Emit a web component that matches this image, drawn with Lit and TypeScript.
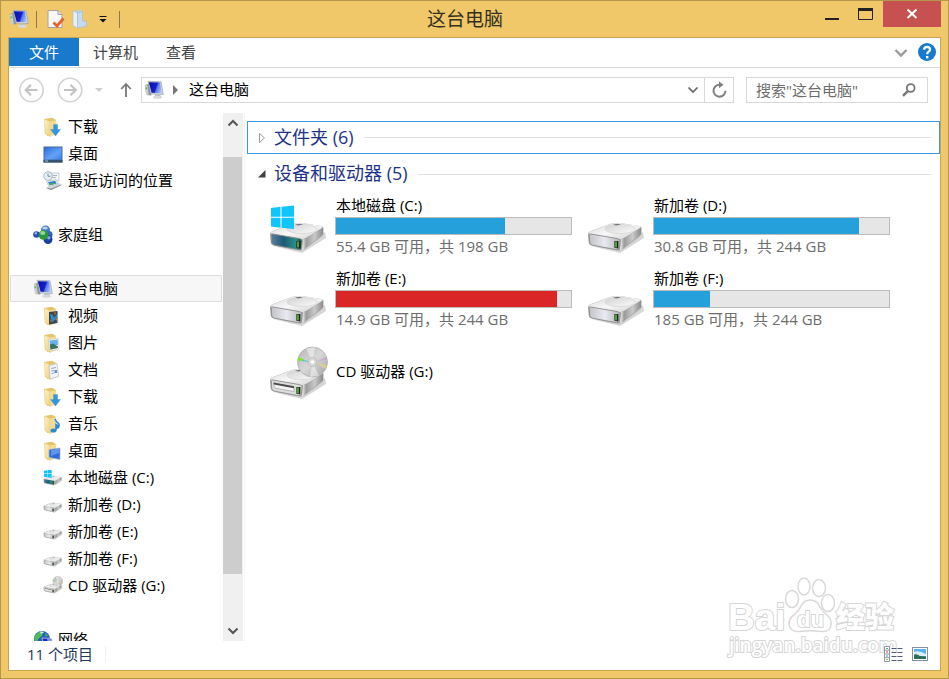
import { LitElement, html, css, svg, nothing } from "lit";
import { customElement } from "lit/decorators.js";
import { classMap } from "lit/directives/class-map.js";

interface NavRow {
  icon: string;
  label: string;
  level: 1 | 2;
  selected?: boolean;
}

interface Drive {
  icon: string;
  name: string;
  detail?: string;
  used?: number;
  full?: boolean;
}

const NAV: (NavRow | null)[] = [
  { icon: "folder-down", label: "下载", level: 2 },
  { icon: "desktop", label: "桌面", level: 2 },
  { icon: "recent", label: "最近访问的位置", level: 2 },
  null,
  { icon: "homegroup", label: "家庭组", level: 1 },
  null,
  { icon: "pc", label: "这台电脑", level: 1, selected: true },
  { icon: "folder-video", label: "视频", level: 2 },
  { icon: "folder-picture", label: "图片", level: 2 },
  { icon: "folder-doc", label: "文档", level: 2 },
  { icon: "folder-down", label: "下载", level: 2 },
  { icon: "folder-music", label: "音乐", level: 2 },
  { icon: "folder-desktop", label: "桌面", level: 2 },
  { icon: "drive-c", label: "本地磁盘 (C:)", level: 2 },
  { icon: "drive", label: "新加卷 (D:)", level: 2 },
  { icon: "drive", label: "新加卷 (E:)", level: 2 },
  { icon: "drive", label: "新加卷 (F:)", level: 2 },
  { icon: "drive-cd", label: "CD 驱动器 (G:)", level: 2 },
  null,
  { icon: "network", label: "网络", level: 1 },
];

const DRIVES: Drive[] = [
  { icon: "drive-c", name: "本地磁盘 (C:)", detail: "55.4 GB 可用，共 198 GB", used: 72 },
  { icon: "drive", name: "新加卷 (D:)", detail: "30.8 GB 可用，共 244 GB", used: 87.4 },
  { icon: "drive", name: "新加卷 (E:)", detail: "14.9 GB 可用，共 244 GB", used: 93.9, full: true },
  { icon: "drive", name: "新加卷 (F:)", detail: "185 GB 可用，共 244 GB", used: 23.9 },
  { icon: "drive-cd", name: "CD 驱动器 (G:)" },
];

// Drives are drawn on a 60x60 grid, used both for tiles and for the tree.
const driveBody = (front: string) => svg`
  <path d="M5 50 L34 57 L58 42 L57 36 L34 52Z" fill="#000" opacity=".16"/>
  <path d="M2 38 Q2 36 5 35 L24 28 Q29 26.5 34 27 L53 30 Q56 30.500 55.500 33 L55.500 38 Q55 39.500 53 41 L37 53 Q34.500 55 31 54.200 L6 49.500 Q3 49 2.600 46Z" fill="#a9a9a9"/>
  <path d="M2.500 37.500 Q3 36 5 35.200 L24 28 Q29 26.500 34 27 L53 30 Q55.500 30.800 54 32 L38 42 Q35.500 43.500 32 43 L5 38.600Z" fill="url(#g-top)"/>
  <ellipse cx="34" cy="33" rx="15" ry="4.600" fill="url(#g-dish)" stroke="#d0d0d0" stroke-width=".6"/>
  <path d="M27 28.500 l5 -.8 l3 .8 l-5 1Z" fill="#777"/>
  <path d="M35 43 Q37 43 39 41.600 L55 31.800 L55 38 L37 52.500 Q35.500 54 34 54Z" fill="url(#g-side)"/>
  <path d="M3.200 38.500 Q3.300 37.600 5 38 L31.500 42.600 Q34 43.200 34 45 L33.400 52 Q33 54.200 31 53.800 L6.500 49.200 Q4 48.800 3.700 46.500Z" fill=${front} stroke="#8d8d8d" stroke-width=".9"/>
  <path d="M28.400 45 h4 v7.500 l-4 -.8Z" fill="#222"/>
  <path d="M29.200 45.600 h1.600 v6 l-1.600 -.4Z" fill="#55c530"/>`;

const folder = svg`
  <path d="M1.500 2 L9 .8 L13 3 L13.500 17 L4 19Z" fill="#e3c468"/>
  <path d="M1.500 2 L7 4.500 L7.500 19.500 L2 16.800Z" fill="url(#g-fold)" stroke="#e0c478" stroke-width=".5"/>
  <path d="M7 4.500 L13 3.200 L13.500 17 L7.500 19.500Z" fill="#f1dc96"/>`;

const pc = svg`
  <path d="M.8 5 L5 3.800 L7.500 15.500 L2.500 15Z" fill="#8e979c"/>
  <path d="M.8 5.200 L3.300 5 L4.800 15.400 L2 15Z" fill="#c9d0d0"/>
  <rect x="1.500" y="7.500" width="1.600" height="1.600" fill="#49c33a"/>
  <path d="M4 1.300 L17 1.800 L19.300 14.600 L7 14Z" fill="#d3d9dd" stroke="#8f98a2" stroke-width=".6"/>
  <path d="M4.800 2.200 L16 2.600 L17.800 13.200 L7.600 12.800Z" fill="url(#g-screen)"/>
  <path d="M11 14.300 h5 l1 2.400 q-3 2 -6 0Z" fill="#b9bfc3"/>
  <ellipse cx="13.500" cy="17.300" rx="4.500" ry="1.500" fill="#d5dadd"/>`;

const winLogo = svg`
  <path d="M3 12 L12.500 10.800 V20.800 H3Z M13.500 10.700 L26 9.500 V20.800 H13.500Z M3 21.700 H12.500 V31.800 L3 30.600Z M13.500 21.700 H26 V33 L13.500 31.800Z" fill="#0fc5fb"/>`;

const disc = svg`
  <circle cx="44.500" cy="20" r="15" fill="url(#g-disc)" stroke="#a8a8a8" stroke-width=".7"/>
  <path d="M44.500 20 L38 6.500 L47 5Z M44.500 20 L51 33.500 L42 35Z" fill="#fff" opacity=".45"/>
  <path d="M30.200 15 L36 17.500 L35.500 19 L30 18.500Z" fill="#7ee61c"/>
  <path d="M34 17.500 L40 19 L40 20 L34 19Z" fill="#42c9c4" opacity=".8"/>
  <path d="M59 17 L48 20 L58.500 15Z" fill="#c98fd0" opacity=".6"/>
  <path d="M57.500 27 L48 21 L59 23Z" fill="#e3cf8d" opacity=".8"/>
  <circle cx="44.500" cy="20" r="4.500" fill="#d8d8d8" stroke="#a5a5a5" stroke-width=".5"/>
  <circle cx="44.500" cy="20" r="1.800" fill="#fff"/>`;

const ICONS: Record<string, { box: string; art: unknown }> = {
  pc: { box: "0 0 20 20", art: pc },
  drive: { box: "0 4 60 60", art: driveBody("url(#g-front)") },
  "drive-c": { box: "0 4 60 60", art: svg`${driveBody("url(#g-teal)")}${winLogo}` },
  "drive-cd": {
    box: "0 4 60 60",
    art: svg`${driveBody("#dcdcdc")}
      <path d="M5.500 41 L26 44.800 L26 49.500 L6.500 46Z" fill="#f4f4f4" stroke="#999" stroke-width=".6"/>
      <path d="M5.500 40.500 L26 44.200 L26 46.200 L6 42.600Z" fill="#4a4a4a"/>${disc}`,
  },
  "folder-down": {
    box: "0 0 20 20",
    art: svg`${folder}<path d="M10.500 7.500 h4 v5 h3 l-5 6.500 l-5 -6.500 h3Z" fill="#2f97e0" stroke="#4b8fc4" stroke-width=".4"/>`,
  },
  "folder-video": {
    box: "0 0 20 20",
    art: svg`${folder}<path d="M6 6 L14.500 5 V17 L6 18.500Z" fill="#37464f"/><path d="M7 8 l3 1 l1 3 l3 -4 v3 l-4 5 l-2 -3Z" fill="#2f8fc9"/><path d="M7 13 l2 2 l-1 2Z M11 6.500 l2 0 l-1 3Z M12 13 l2 -1 v3Z" fill="#c9793a"/>`,
  },
  "folder-picture": {
    box: "0 0 20 20",
    art: svg`${folder}<path d="M5.500 6.500 L15.500 5.500 L16 16 L6.500 18Z" fill="#fff" stroke="#b8b8b8" stroke-width=".5"/><path d="M6.500 7.500 L14.700 6.500 L15 12 L7 13Z" fill="#68b2e8"/><path d="M6.900 11.500 L10 10.500 L15 13.500 V15 L7.300 16.700Z" fill="#3e7462"/>`,
  },
  "folder-doc": {
    box: "0 0 20 20",
    art: svg`${folder}<path d="M6 5.500 L14 3.500 L15.500 16.500 L7 19Z" fill="#f1f4fa" stroke="#a8afbb" stroke-width=".6"/><path d="M8 8.500 l5 -1 M8.200 11 l3 -.6 M8.400 13.500 l3 -.6" stroke="#96a5bf" stroke-width="1"/><rect x="11.500" y="10" width="2.500" height="3" fill="#6891cc"/>`,
  },
  "folder-music": {
    box: "0 0 20 20",
    art: svg`${folder}<path d="M12 5 Q13 8 15.500 9.500 Q17 12 14.500 14.500 Q15.500 11.500 13 10.500 V16" fill="none" stroke="#2c8ad6" stroke-width="1.600"/><ellipse cx="10.500" cy="16.500" rx="3" ry="2" fill="#2c8ad6"/>`,
  },
  "folder-desktop": {
    box: "0 0 20 20",
    art: svg`${folder}<path d="M6 8.500 L17 7 V18.500 L6 16.500Z" fill="#2f6ad8" stroke="#a9bad0" stroke-width=".8"/><path d="M8 8.500 L16 7.700 V12 L8 15Z" fill="#5e96ec"/>`,
  },
  desktop: {
    box: "0 0 20 20",
    art: svg`<rect x=".5" y="2.500" width="19" height="16" fill="#486a9c"/><rect x="1.500" y="3.500" width="17" height="12" fill="url(#g-desk)"/><rect x=".5" y="16" width="19" height="2.500" fill="#37526f"/><rect x="2" y="16.500" width="3" height="1" fill="#9cc7e8"/>`,
  },
  recent: {
    box: "0 0 20 20",
    art: svg`<rect x="7" y="2" width="9" height="8" fill="#f3f5f6" stroke="#b8bec2" stroke-width=".7"/><path d="M9 4.500 h5 M9 6.500 h4" stroke="#a9bac6"/><circle cx="5" cy="5" r="4.300" fill="#e4eef5" stroke="#a9b9c4" stroke-width="1"/><path d="M5 2.500 V5.300 H7.500" fill="none" stroke="#5d7f99" stroke-width=".8"/><path d="M3 17 L15.500 12.500 L19 14 L8 19.200Z" fill="#8e979c"/><path d="M3 16.300 L15.500 12 L18.500 13.200 L8 17.600Z" fill="#d5dadd"/><path d="M3.500 10.500 L13 8.500 L15 13 L6 15.500Z" fill="#eef2f5" stroke="#aab5bd" stroke-width=".6"/><path d="M5 11.200 L12.300 9.700 L13.500 12.500 L6.700 14.300Z" fill="#2d86c5"/><path d="M6 13 L9 12 L13.500 12.500 L6.700 14.300Z" fill="#53a35d"/>`,
  },
  homegroup: {
    box: "0 0 20 20",
    art: svg`<circle cx="3.500" cy="9.500" r="3.300" fill="#2d4fb4"/><circle cx="2.800" cy="8.300" r="1.200" fill="#9db4ee"/><circle cx="12.500" cy="5" r="4.500" fill="#4779c4"/><ellipse cx="12" cy="3" rx="2.800" ry="1.500" fill="#b8d2f3"/><circle cx="16" cy="9.500" r="3.600" fill="#3a63bd"/><circle cx="15" cy="14.500" r="4.500" fill="#1f3f9f"/><circle cx="15.800" cy="12.800" r="1.800" fill="#86a4e6"/><circle cx="10.500" cy="10" r="4.800" fill="#2a9741"/><ellipse cx="9.700" cy="8" rx="2.600" ry="1.900" fill="#8fdc8c"/>`,
  },
  network: {
    box: "0 0 20 20",
    art: svg`<circle cx="9" cy="9" r="8" fill="#2760bd"/><path d="M2 6 Q6 0 10 2 L9 6 L5 9 L4 14 Q0 10 2 6Z M12 3 L15 5 L13 7Z" fill="#4fbf52"/><path d="M7 1.500 Q10 1 11 2.500 L8 4Z" fill="#cdeafd"/><path d="M9 8 L18.500 8.500 L19.500 16 L11 16Z" fill="#1a28c4" stroke="#c7d0d8" stroke-width=".8"/><path d="M14 9 L18 9.200 L18.800 15.300 L16 15.300Z" fill="#7f98f0"/>`,
  },
};

const icon = (name: string, cls = "ico") =>
  svg`<svg class=${cls} viewBox=${cls === "ico" ? ICONS[name].box : "0 0 60 60"} aria-hidden="true">${ICONS[name].art}</svg>`;

@customElement("app-root")
export class AppRoot extends LitElement {
  static styles = css`
    :host {
      display: block;
      font: 15px/20px "Open Sans", "Noto Sans CJK SC", sans-serif;
      color: #000;
    }
    * { box-sizing: border-box; }
    button, input { font: inherit; color: inherit; border: 0; padding: 0; margin: 0; background: none; }
    a { color: inherit; text-decoration: none; }
    ul { list-style: none; margin: 0; padding: 0; }
    svg { display: block; flex: none; }
    h1, h2 { margin: 0; font-weight: 400; }
    .defs { position: absolute; }
    .window {
      position: relative;
      display: flex;
      flex-direction: column;
      height: 100vh;
      padding: 0 7px 7px;
      background: #f0c869;
      border: 1px solid #b4974f;
    }
    .title {
      display: grid;
      grid-template-columns: 1fr auto 1fr;
      height: 36px;
      padding-left: 1px;
      flex: none;
    }
    .title h1 { font-size: 19px; line-height: 36px; padding-right: 20px; color: #33301f; }
    .quick { display: flex; align-items: center; }
    .sep { width: 1px; height: 17px; background: #8f7a45; }
    .sep.first { margin: 0 9px 0 7px; }
    .sep.last { margin-left: 7px; }
    .ico { width: 20px; height: 20px; }
    .quick button { display: block; }
    .quick button + button { margin-left: 5px; }
    .controls { display: flex; justify-content: flex-end; align-items: flex-start; }
    .controls button { width: 34px; height: 26px; display: grid; place-items: center; }
    .controls .close { width: 58px; background: #c75050; }
    .frame {
      flex: 1;
      min-height: 0;
      display: flex;
      flex-direction: column;
      background: #fff;
      border: 1px solid #c8a454;
    }
    .ribbon {
      display: flex;
      align-items: center;
      height: 30px;
      flex: none;
      border-bottom: 1px solid #dadbdc;
      color: #444;
    }
    .ribbon .tab { height: 28px; padding: 0 14px; align-self: flex-start; }
    .ribbon .file { width: 70px; background: #1979ca; color: #fff; }
    .ribbon .fold { margin-left: auto; margin-right: 9px; }
    .ribbon .help { margin-right: 3px; }
    .bar { display: flex; align-items: center; height: 45px; flex: none; padding: 0 12px 2px 10px; }
    .bar .fwd { margin-left: 12px; }
    .bar .hist { width: 32px; display: grid; place-items: center; }
    .bar .up { width: 22px; display: grid; place-items: center; margin-right: 4px; }
    .address {
      flex: 1;
      min-width: 0;
      height: 26px;
      display: flex;
      align-items: center;
      border: 1px solid #d9d9d9;
      padding-left: 2px;
    }
    .address button { padding-bottom: 2px; }
    .address .crumb-arrow { margin: 0 10px 0 8px; }
    .address .drop { margin-left: auto; width: 22px; display: grid; place-items: center; padding: 0; }
    .address .refresh {
      width: 29px;
      height: 24px;
      display: grid;
      place-items: center;
      padding: 0;
      border-left: 1px solid #d9d9d9;
    }
    .search {
      display: flex;
      align-items: center;
      width: 182px;
      height: 26px;
      margin-left: 12px;
      padding: 0 11px 0 9px;
      border: 1px solid #d9d9d9;
    }
    .search input { flex: 1; min-width: 0; outline: 0; }
    .search input::placeholder { color: #6d6d6d; opacity: 1; }
    .body { flex: 1; min-height: 0; display: flex; }
    .nav { width: 236px; flex: none; display: flex; border-right: 1px solid #f5f5f5; }
    .tree { width: 214px; padding: 0 1px; overflow: hidden; }
    .tree li { height: 27px; }
    .row {
      display: flex;
      align-items: center;
      gap: 5px;
      height: 27px;
      padding-left: 32px;
      border: 1px solid transparent;
      white-space: nowrap;
    }
    .row span { padding-bottom: 2px; }
    .row.top { padding-left: 22px; }
    .row.selected { background: #f7f7f7; border-color: #dedede; }
    .scroll { width: 20px; display: flex; flex-direction: column; background: #f0f0f0; }
    .scroll button { height: 20px; display: grid; place-items: center; flex: none; }
    .before { flex: 24; }
    .thumb { flex: 417; background: #cdcdcd; margin-right: 1px; }
    .after { flex: 47; }
    .main { flex: 1; min-width: 0; padding: 8px 0 0 2px; overflow: hidden; }
    .group {
      display: flex;
      align-items: center;
      width: 100%;
      height: 33px;
      padding: 0 8px 0 9px;
      border: 1px solid transparent;
      color: #1e3287;
    }
    .group.focus { border-color: #3c96e6; }
    .group.open { height: 40px; }
    .group h2 { font-size: 18px; line-height: 24px; margin: 0 10px 0 7px; padding-bottom: 2px; }
    .group .rule { flex: 1; height: 1px; background: #e2e2e2; }
    .tiles {
      display: grid;
      grid-template-columns: repeat(auto-fill, 318px);
      row-gap: 13px;
      padding: 1px 0 0 21px;
    }
    .tile { display: flex; gap: 7px; height: 60px; }
    .tile .info { width: 237px; }
    .tile .info.plain { align-self: center; }
    .big { width: 60px; height: 60px; margin-top: 1px; }
    .name, .detail { padding-left: 1px; }
    .meter { height: 18px; margin: 2px 0 1px; background: #e6e6e6; border: 1px solid #bcbcbc; }
    .fill { height: 16px; background: #26a0da; }
    .fill.full { background: #da2626; }
    .detail { color: #6d6d6d; }
    .status { display: flex; align-items: center; height: 29px; flex: none; padding: 0 12px 3px 18px; color: #1e395b; }
    .status .line { width: 1px; height: 16px; background: #f0f0f0; margin-left: 12px; }
    .status .views { display: flex; gap: 9px; margin-left: auto; z-index: 1; }
    .mark { position: absolute; right: 48px; bottom: 18px; pointer-events: none; }
    .mark text { fill: #fff; stroke: #d6d6d6; stroke-width: 2px; paint-order: stroke; }
    .mark .latin { font: 700 37px "Liberation Sans", sans-serif; }
    .mark .du { font: 700 22px "Liberation Sans", sans-serif; }
    .mark .han { font: 900 29px "Noto Sans CJK SC", sans-serif; }
    .mark .url { font: 600 19px "Open Sans", sans-serif; }
  `;

  private defs() {
    return html`<svg class="defs" width="0" height="0" aria-hidden="true"><defs>
      <linearGradient id="g-top" x1="0" y1="0" x2="1" y2="1"><stop offset="0" stop-color="#d6d6d6"/><stop offset=".5" stop-color="#f7f7f7"/><stop offset="1" stop-color="#cfcfcf"/></linearGradient>
      <linearGradient id="g-dish" x1="0" y1="0" x2="1" y2="1"><stop offset="0" stop-color="#d2d2d2"/><stop offset="1" stop-color="#fbfbfb"/></linearGradient>
      <linearGradient id="g-side" x1="0" y1="0" x2="1" y2="0"><stop offset="0" stop-color="#f2f2f2"/><stop offset=".2" stop-color="#9b9b9b"/><stop offset=".6" stop-color="#c9c9c9"/><stop offset="1" stop-color="#8b8b8b"/></linearGradient>
      <linearGradient id="g-front" x1="0" y1="0" x2="1" y2="0"><stop offset="0" stop-color="#c2c2c8"/><stop offset=".5" stop-color="#e9e9f1"/><stop offset="1" stop-color="#b5b5bb"/></linearGradient>
      <linearGradient id="g-teal" x1="0" y1="0" x2="1" y2="0"><stop offset="0" stop-color="#5c7f9c"/><stop offset=".4" stop-color="#1b5a78"/><stop offset=".8" stop-color="#2b8f86"/><stop offset="1" stop-color="#123c3c"/></linearGradient>
      <linearGradient id="g-fold" x1="0" y1="0" x2="1" y2="1"><stop offset="0" stop-color="#fdf3c4"/><stop offset="1" stop-color="#ecd07c"/></linearGradient>
      <linearGradient id="g-desk" x1="0" y1="0" x2="1" y2="1"><stop offset="0" stop-color="#2d6fdc"/><stop offset=".6" stop-color="#63a2f7"/><stop offset="1" stop-color="#3d7de0"/></linearGradient>
      <linearGradient id="g-screen" x1="0" y1=".3" x2="1" y2=".6"><stop offset="0" stop-color="#0c10a4"/><stop offset=".55" stop-color="#1420cc"/><stop offset=".65" stop-color="#5a7cec"/><stop offset="1" stop-color="#a9bdf6"/></linearGradient>
      <linearGradient id="g-disc" x1="0" y1="0" x2="1" y2="1"><stop offset="0" stop-color="#b4b4b4"/><stop offset=".5" stop-color="#d8d8d8"/><stop offset="1" stop-color="#a0a0a0"/></linearGradient>
    </defs></svg>`;
  }

  private titleBar() {
    return html`<header class="title">
      <div class="quick">
        ${icon("pc")}
        <span class="sep first"></span>
        <button aria-label="属性"><svg width="20" height="20" viewBox="0 0 20 20"><path d="M2 1.500 H12 L16 5.500 V18.500 H2Z" fill="#f7f7f7" stroke="#a3a3a3"/><path d="M12 1.500 V5.500 H16" fill="#ddd" stroke="#a3a3a3"/><path d="M7.500 13.500 L11 17 L17.500 9.500" fill="none" stroke="#e4622d" stroke-width="2.800"/></svg></button>
        <button aria-label="新建文件夹"><svg width="18" height="20" viewBox="0 0 18 20"><path d="M2 2 L11 1 L12 12 L16 13 V17 L6 19Z" fill="#b9cfe4"/><path d="M2 2 L6.500 4 V19 L2 16.500Z" fill="#e6f0f8" stroke="#a9bfd4" stroke-width=".6"/><path d="M6.500 4 L11.500 2.500 V12 L15.500 12.500 V17 L6.500 19Z" fill="#c8dbec" stroke="#9eb8d0" stroke-width=".6"/></svg></button>
        <button aria-label="自定义快速访问工具栏"><svg width="18" height="20" viewBox="0 0 18 20"><path d="M5.500 7.500 H12.500" stroke="#111"/><path d="M5.500 10 H12.500 L9 13.500Z" fill="#111"/></svg></button>
        <span class="sep last"></span>
      </div>
      <h1>这台电脑</h1>
      <div class="controls">
        <button aria-label="最小化"><svg width="16" height="26" viewBox="0 0 16 26"><path d="M1 18 H15" stroke="#222" stroke-width="2"/></svg></button>
        <button aria-label="最大化"><svg width="16" height="26" viewBox="0 0 16 26"><path d="M.5 7.500 H14.500 V18.500 H.5Z" fill="none" stroke="#222"/><path d="M0 8.500 H15" stroke="#222" stroke-width="3"/></svg></button>
        <button class="close" aria-label="关闭"><svg width="12" height="26" viewBox="0 0 12 26"><path d="M1.500 8.500 L10.500 17 M10.500 8.500 L1.500 17" stroke="#fff" stroke-width="2"/></svg></button>
      </div>
    </header>`;
  }

  private ribbon() {
    return html`<nav class="ribbon">
      <button class="tab file">文件</button>
      <button class="tab">计算机</button>
      <button class="tab">查看</button>
      <button class="fold" aria-label="展开功能区"><svg width="14" height="10" viewBox="0 0 14 10"><path d="M1.500 2 L7 7.500 L12.500 2" fill="none" stroke="#999" stroke-width="2.400"/></svg></button>
      <button class="help" aria-label="帮助"><svg width="20" height="20" viewBox="0 0 20 20"><circle cx="10" cy="9" r="9" fill="#1979ca"/><path d="M7 6.600 Q7.200 3.800 10.200 3.800 Q13 4 13 6.400 Q13 7.900 11.300 8.900 Q10.200 9.600 10.200 11.300" fill="none" stroke="#fff" stroke-width="2.200"/><rect x="9" y="13" width="2.400" height="2.400" fill="#fff"/></svg></button>
    </nav>`;
  }

  private addressBar() {
    return html`<div class="bar">
      <button aria-label="后退"><svg width="26" height="26" viewBox="0 0 26 26"><circle cx="12.500" cy="13" r="11.700" fill="none" stroke="#d2d2d2" stroke-width="1.600"/><path d="M7 13 H18.500 M12 7.800 L6.800 13 L12 18.200" fill="none" stroke="#c3c3c3" stroke-width="2.200"/></svg></button>
      <button class="fwd" aria-label="前进"><svg width="26" height="26" viewBox="0 0 26 26"><circle cx="13" cy="13" r="11.700" fill="none" stroke="#d2d2d2" stroke-width="1.600"/><path d="M7 13 H18.500 M13.500 7.800 L18.700 13 L13.500 18.200" fill="none" stroke="#c3c3c3" stroke-width="2.200"/></svg></button>
      <button class="hist" aria-label="最近浏览的位置"><svg width="8" height="6" viewBox="0 0 8 6"><path d="M0 1 H8 L4 5Z" fill="#cfcfcf"/></svg></button>
      <button class="up" aria-label="向上"><svg width="12" height="16" viewBox="0 0 12 16"><path d="M6 15 V2.500 M1.200 7 L6 2 L10.800 7" fill="none" stroke="#787878" stroke-width="1.800"/></svg></button>
      <div class="address">
        ${icon("pc")}
        <svg class="crumb-arrow" width="7" height="10" viewBox="0 0 7 10"><path d="M1 0 L6 5 L1 10Z" fill="#777"/></svg>
        <button>这台电脑</button>
        <button class="drop" aria-label="以前的位置"><svg width="12" height="8" viewBox="0 0 12 8"><path d="M1.500 1.500 L6 6 L10.500 1.500" fill="none" stroke="#666" stroke-width="1.700"/></svg></button>
        <button class="refresh" aria-label="刷新"><svg width="16" height="18" viewBox="0 0 16 18"><path d="M8.500 3.700 A6 6 0 1 0 14.500 9.800" fill="none" stroke="#808080" stroke-width="2"/><path d="M8 .5 L12.500 3.800 L8 7.200Z" fill="#808080"/></svg></button>
      </div>
      <label class="search">
        <input type="text" aria-label="搜索" placeholder='搜索"这台电脑"' />
        <svg width="14" height="14" viewBox="0 0 14 14"><circle cx="8.700" cy="5" r="3.900" fill="none" stroke="#777" stroke-width="1.800"/><path d="M6 7.800 L1 12.800" stroke="#777" stroke-width="2.400"/></svg>
      </label>
    </div>`;
  }

  private navPane() {
    return html`<nav class="nav">
      <ul class="tree">
        ${NAV.map((r) =>
          r
            ? html`<li><a href="#" class=${classMap({ row: true, top: r.level === 1, selected: !!r.selected })}>${icon(r.icon)}<span>${r.label}</span></a></li>`
            : html`<li></li>`
        )}
      </ul>
      <div class="scroll">
        <button aria-label="向上滚动"><svg width="12" height="8" viewBox="0 0 12 8"><path d="M1.500 6.500 L6 2 L10.500 6.500" fill="none" stroke="#555" stroke-width="2"/></svg></button>
        <div class="before"></div>
        <div class="thumb"></div>
        <div class="after"></div>
        <button aria-label="向下滚动"><svg width="12" height="8" viewBox="0 0 12 8"><path d="M1.500 1.500 L6 6 L10.500 1.500" fill="none" stroke="#555" stroke-width="2"/></svg></button>
      </div>
    </nav>`;
  }

  private tile(d: Drive) {
    return html`<a href="#" class="tile">
      ${icon(d.icon, "big")}
      <div class=${classMap({ info: true, plain: !d.detail })}>
        <div class="name">${d.name}</div>
        ${d.used !== undefined
          ? html`<div class="meter" role="meter" aria-label=${d.name} aria-valuenow=${d.used}>
                <div class=${classMap({ fill: true, full: !!d.full })} style="width:${d.used}%"></div>
              </div>
              <div class="detail">${d.detail}</div>`
          : nothing}
      </div>
    </a>`;
  }

  private statusBar() {
    return html`<footer class="status">
      <span>11 个项目</span><span class="line"></span>
      <div class="views">
        <button aria-label="详细信息"><svg width="20" height="18" viewBox="0 0 20 18"><path d="M1.500 1.500 H6.500 V16.500 H1.500Z M1.500 5.200 H6.500 M1.500 9 H6.500 M1.500 12.700 H6.500" fill="#fff" stroke="#8f98a5"/><path d="M3 3.500 h2" stroke="#6d9c6d"/><path d="M3 7 h2" stroke="#e03c3c"/><path d="M3 11 h2" stroke="#3a8ae0"/><path d="M3 14.500 h2" stroke="#a6c93a"/><path d="M8.500 3.500 h5 M14.500 3.500 h5 M8.500 7.500 h5 M14.500 7.500 h5 M8.500 11.500 h5 M14.500 11.500 h5 M8.500 15.500 h5 M14.500 15.500 h5" stroke="#4d5d7a"/></svg></button>
        <button aria-label="大图标"><svg width="16" height="18" viewBox="0 0 16 18"><rect x=".5" y="2.500" width="15" height="13" fill="#fff" stroke="#8391a8"/><rect x="2" y="4" width="12" height="10" fill="#5cb3ee"/><path d="M2 7 Q6 5 14 9 V11 H2Z" fill="#d9f0fb"/><path d="M2 9.500 Q5 8.500 8 11 L14 11.500 V14 H2Z" fill="#2f6e5b"/></svg></button>
      </div>
    </footer>`;
  }

  private watermark() {
    return html`<svg class="mark" width="174" height="88" viewBox="0 0 174 88">
      <text class="latin" x="2" y="58">Bai</text>
      <g fill="#fff" stroke="#d9d9d9" stroke-width="1.500">
        <ellipse cx="66" cy="27" rx="6.500" ry="8.500"/>
        <ellipse cx="78" cy="14.500" rx="6" ry="8.500"/>
        <ellipse cx="93" cy="16" rx="6.500" ry="8.500"/>
        <ellipse cx="102" cy="31" rx="6.500" ry="8.500"/>
        <path d="M84 28 Q91 28 94 35 Q96 39 101 43 Q106 47 105 53 Q104 60 96 59.500 Q84 58 73 59.500 Q64 60 63 52 Q63 46 68 43 Q73 39 75 34 Q78 28 84 28Z"/>
      </g>
      <text class="du" x="71" y="55">du</text>
      <text class="han" x="110" y="56">经验</text>
      <text class="url" x="3" y="80">jingyan.baidu.com</text>
    </svg>`;
  }

  render() {
    return html`${this.defs()}
      <div class="window">
        ${this.titleBar()}
        <div class="frame">
          ${this.ribbon()} ${this.addressBar()}
          <div class="body">
            ${this.navPane()}
            <main class="main">
              <button class="group focus">
                <svg width="10" height="12" viewBox="0 0 10 12"><path d="M2.500 1.500 L7.500 6 L2.500 10.500Z" fill="#fff" stroke="#a0a0a0"/></svg>
                <h2>文件夹 (6)</h2><span class="rule"></span>
              </button>
              <button class="group open">
                <svg width="10" height="12" viewBox="0 0 10 12"><path d="M8.500 2 V9.500 H1Z" fill="#404040"/></svg>
                <h2>设备和驱动器 (5)</h2><span class="rule"></span>
              </button>
              <div class="tiles">${DRIVES.map((d) => this.tile(d))}</div>
            </main>
          </div>
          ${this.statusBar()}
        </div>
        ${this.watermark()}
      </div>`;
  }
}
